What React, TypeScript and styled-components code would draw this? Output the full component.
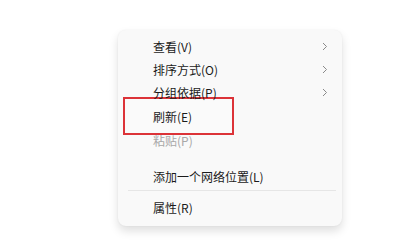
import React from "react";
import styled, { createGlobalStyle } from "styled-components";

const Global = createGlobalStyle`
  html, body { margin: 0; padding: 0; background: #ffffff; }
  body { font-family: "Microsoft YaHei", "Noto Sans CJK SC", "Noto Sans", sans-serif; }
`;

const Page = styled.div`
  width: 414px;
  height: 243px;
  background: #ffffff;
  padding: 30px 0 0 118px;
  box-sizing: border-box;
`;

const Menu = styled.div`
  width: 224px;
  box-sizing: border-box;
  background: #f9f9f9;
  border-radius: 8px;
  box-shadow: 0 5px 10px rgba(0, 0, 0, 0.13), 0 0 2px rgba(0, 0, 0, 0.06);
  padding: 5px 0 8px 0;
  display: flex;
  flex-direction: column;
`;

const Row = styled.div<{ $h?: number; $mt?: number }>`
  position: relative;
  height: ${(p) => p.$h ?? 23}px;
  margin-top: ${(p) => p.$mt ?? 0}px;
  display: flex;
  align-items: center;
  padding: 0 14px 0 35px;
`;

const Label = styled.span<{ $disabled?: boolean }>`
  position: relative;
  z-index: 2;
  font-size: 12px;
  color: ${(p) => (p.$disabled ? "#a8a8a8" : "#1b1b1b")};
  flex: 1;
  white-space: nowrap;
`;

const Highlight = styled.div`
  position: absolute;
  z-index: 1;
  left: 5px;
  top: -7px;
  width: 111px;
  height: 38px;
  box-sizing: border-box;
  background: #fafafa;
  border: 2px solid #dc3338;
`;

const Separator = styled.div`
  height: 1px;
  background: #e6e6e6;
  margin: 2px 6px 5px 10px;
`;

const Chevron = () => (
  <svg width="6" height="9" viewBox="0 0 6 9">
    <path d="M1 1 L4.5 4.5 L1 8" fill="none" stroke="#8a8a8a" strokeWidth="1" />
  </svg>
);

export default function App() {
  return (
    <>
      <Global />
      <Page>
        <Menu>
          <Row>
            <Label>查看(V)</Label>
            <Chevron />
          </Row>
          <Row>
            <Label>排序方式(O)</Label>
            <Chevron />
          </Row>
          <Row>
            <Label>分组依据(P)</Label>
            <Chevron />
          </Row>
          <Row $h={24}>
            <Highlight />
            <Label>刷新(E)</Label>
          </Row>
          <Row $h={25}>
            <Label $disabled>粘贴(P)</Label>
          </Row>
          <Row $h={23} $mt={12}>
            <Label>添加一个网络位置(L)</Label>
          </Row>
          <Separator />
          <Row $h={22}>
            <Label>属性(R)</Label>
          </Row>
        </Menu>
      </Page>
    </>
  );
}
